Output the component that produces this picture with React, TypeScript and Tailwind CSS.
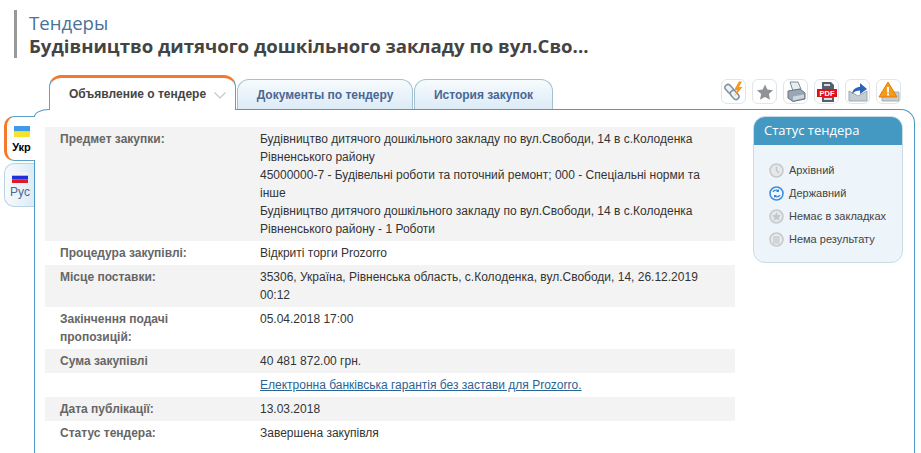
const rows: { l: string[]; v: React.ReactNode; g?: boolean }[] = [
  {
    l: ["Предмет закупки:"],
    g: true,
    v: (
      <>
        Будівництво дитячого дошкільного закладу по вул.Свободи, 14 в с.Колоденка Рівненського району
        <br />
        45000000-7 - Будівельні роботи та поточний ремонт; 000 - Спеціальні норми та інше
        <br />
        Будівництво дитячого дошкільного закладу по вул.Свободи, 14 в с.Колоденка Рівненського району - 1 Роботи
      </>
    ),
  },
  { l: ["Процедура закупівлі:"], v: "Відкриті торги Prozorro" },
  { l: ["Місце поставки:"], g: true, v: "35306, Україна, Рівненська область, с.Колоденка, вул.Свободи, 14, 26.12.2019 00:12" },
  { l: ["Закінчення подачі", "пропозицій:"], v: "05.04.2018 17:00" },
  { l: ["Сума закупівлі"], g: true, v: "40 481 872.00 грн." },
  { l: [], v: <a className="text-[#2a6496] underline">Електронна банківська гарантія без застави для Prozorro.</a> },
  { l: ["Дата публікації:"], g: true, v: "13.03.2018" },
  { l: ["Статус тендера:"], v: "Завершена закупівля" },
];

function Flag({ a, b, c }: { a: string; b: string; c?: string }) {
  return (
    <svg width="16" height="11" viewBox="0 0 16 11" className="block">
      {c ? (
        <>
          <rect width="16" height="3.700" fill={a} />
          <rect y="3.700" width="16" height="3.700" fill={b} />
          <rect y="7.400" width="16" height="3.600" fill={c} />
        </>
      ) : (
        <>
          <rect width="16" height="5.500" fill={a} />
          <rect y="5.500" width="16" height="5.500" fill={b} />
        </>
      )}
    </svg>
  );
}

const toolIcons = [
  <svg key="0" width="22" height="22" viewBox="0 0 22 22" fill="none">
    <g transform="rotate(48 9 11)" stroke="#7f909e" strokeWidth="1.500" fill="#eef2f5">
      <rect x="0" y="8" width="10" height="6" rx="3" />
      <rect x="8" y="8" width="10" height="6" rx="3" />
    </g>
    <path d="M16 0.500 L11 9 L14 9 L12 15 L19.500 6 L16 6 L19 0.500 Z" fill="#f29a1f" />
  </svg>,
  <svg key="1" width="20" height="20" viewBox="0 0 20 20">
    <path d="M10 2.500 L12.400 7.600 L18 8.300 L13.900 12.100 L15 17.700 L10 15 L5 17.700 L6.100 12.100 L2 8.300 L7.600 7.600 Z" fill="#8f9397" />
  </svg>,
  <svg key="2" width="22" height="22" viewBox="0 0 22 22">
    <path d="M5 1 L13 1 L16 8 L8 10 Z" fill="#e8edf0" stroke="#7d8a95" />
    <path d="M3 10 L15 8 L20 12 L20 18 L8 20.500 L3 17 Z" fill="#9aa7b2" stroke="#66737e" />
    <path d="M8 15.500 L19 13.500 L19 17 L8 19.500 Z" fill="#cfd6dc" />
  </svg>,
  <svg key="3" width="22" height="22" viewBox="0 0 22 22">
    <path d="M6 1 H15 L18 4 V21 H6 Z" fill="#55606b" />
    <path d="M8 3 H14 V5 H8 Z M8 17 H16 V19 H8 Z" fill="#d8dde2" />
    <rect x="1" y="8" width="20" height="8" fill="#e0101a" />
    <text x="11" y="14.700" textAnchor="middle" fontSize="7.500" fontWeight="700" fill="#fff" fontFamily="Liberation Sans">PDF</text>
  </svg>,
  <svg key="4" width="22" height="22" viewBox="0 0 22 22">
    <path d="M2 10 L11 15 L20 10 V20 H2 Z" fill="#c5ccd2" stroke="#a0a9b1" />
    <path d="M5 13 C6 8 9 6 13 6 V2 L20 8 L13 13 V9.500 C10 9.500 7 10.500 5 13 Z" fill="#2d62b5" />
  </svg>,
  <svg key="5" width="22" height="22" viewBox="0 0 22 22">
    <path d="M4 11 H21 V20 H4 Z" fill="#c9ced3" stroke="#a5acb3" />
    <path d="M10 1 L19 16 H1 Z" fill="#f59a16" stroke="#e07f0a" />
    <rect x="9" y="6" width="2" height="5.500" fill="#fff" />
    <rect x="9" y="12.500" width="2" height="2" fill="#fff" />
  </svg>,
];

const statusIcons = [
  <svg key="a" width="15" height="15" viewBox="0 0 15 15" fill="none">
    <circle cx="7.500" cy="7.500" r="6.500" fill="#e4e8ea" stroke="#c6cacc" strokeWidth="1.600" />
    <path d="M7.500 3.500 V7.500 L10 10" stroke="#c3c7ca" strokeWidth="1.400" />
  </svg>,
  <svg key="b" width="15" height="15" viewBox="0 0 15 15" fill="none">
    <circle cx="7.500" cy="7.500" r="6.500" fill="#eef7fd" stroke="#3f8fdc" strokeWidth="1.600" />
    <path d="M3.500 6 C4.500 3.500 7 3 9 4 L10 3 V6 H7 L8 5 C6.500 4.500 5.500 5 5 6 Z M11.500 9 C10.500 11.500 8 12 6 11 L5 12 V9 H8 L7 10 C8.500 10.500 9.500 10 10 9 Z" fill="#3586d6" />
  </svg>,
  <svg key="c" width="15" height="15" viewBox="0 0 15 15" fill="none">
    <circle cx="7.500" cy="7.500" r="6.500" fill="#e4e8ea" stroke="#c6cacc" strokeWidth="1.600" />
    <path d="M7.500 3 L8.800 6 L12 6.300 L9.600 8.400 L10.300 11.500 L7.500 9.900 L4.700 11.500 L5.400 8.400 L3 6.300 L6.200 6 Z" fill="#c3c7ca" />
  </svg>,
  <svg key="d" width="15" height="15" viewBox="0 0 15 15" fill="none">
    <circle cx="7.500" cy="7.500" r="6.500" fill="#e8ebed" stroke="#c6cacc" strokeWidth="1.600" />
    <path d="M4 5 H11 M4 7 H11 M4 9 H11 M4 11 H11 M5 4 V11.500 M7 4 V11.500 M9 4 V11.500" stroke="#c0c4c7" strokeWidth="0.700" />
  </svg>,
];

const statuses = ["Архівний", "Державний", "Немає в закладках", "Нема результату"];

export default function App() {
  return (
    <div className="w-[921px] h-[453px] overflow-hidden bg-white font-['Liberation_Sans',Arial,sans-serif] text-[12px] text-[#333]">
      <div className="ml-[14px] mt-[10px] pt-[1px] h-[48px] border-l-[3px] border-[#999] pl-[12px] font-['Open_Sans',sans-serif] text-[18.600px] leading-[23px]">
        <div className="text-[#4a7196]">Тендеры</div>
        <div className="font-bold text-[#444]">Будівництво дитячого дошкільного закладу по вул.Сво...</div>
      </div>

      <div className="relative z-10 mt-[17px] ml-[49px] h-[34px] flex items-end gap-px">
        <div className="h-[35px] w-[187px] -mb-px mr-px bg-white border-x border-[#5ba3c7] border-t-[3px] border-t-[#f4792f] rounded-t-[12px] flex items-center pl-[19px] gap-[8px] font-bold text-[#444]">
          <span>Объявление о тендере</span>
          <svg width="12" height="7" viewBox="0 0 12 7" fill="none" className="mt-[3px]">
            <path d="M0.500 0.500 L6 6 L11.500 0.500" stroke="#c4c8cb" strokeWidth="1.200" />
          </svg>
        </div>
        <div className="h-[30px] w-[176px] -ml-px border border-b-0 border-[#a3c1d1] rounded-t-[12px] bg-gradient-to-b from-[#f7fbfd] to-[#dcebf6] flex items-center justify-center font-bold text-[#4a6795]">
          Документы по тендеру
        </div>
        <div className="h-[30px] w-[139px] border border-b-0 border-[#a3c1d1] rounded-t-[12px] bg-gradient-to-b from-[#f7fbfd] to-[#dcebf6] flex items-center justify-center font-bold text-[#4a6795]">
          История закупок
        </div>
        <div className="ml-auto mr-[20px] mb-[5px] flex gap-[6px]">
          {toolIcons.map((icon, i) => (
            <div key={i} className="w-[25px] h-[25px] border border-[#dfe6ea] rounded-[6px] bg-white flex items-center justify-center">
              {icon}
            </div>
          ))}
        </div>
      </div>

      <div className="relative ml-[34px] mr-[6px] h-[400px] border-l border-t border-r border-[#4a9cc5] rounded-tl-[15px_8px] rounded-tr-[14px] flex pl-[10px] pt-[17px]">
        <div className="absolute left-[-31px] top-[6px] w-[31px] flex flex-col gap-[2px]">
          <div className="h-[45px] w-[31px] -mr-px bg-white border-y border-[#5ba3c7] border-l-[3px] border-l-[#f4792f] rounded-l-[10px] flex flex-col items-center pt-[9px] pl-[1px]">
            <Flag a="#3f9be8" b="#f5e22a" />
            <span className="font-bold text-[11px] leading-[17px] mt-[2px] text-black">Укр</span>
          </div>
          <div className="h-[44px] w-[30px] border-y border-l border-[#b9d3e0] rounded-l-[10px] bg-gradient-to-r from-[#f7fbfd] to-[#dcebf6] flex flex-col items-center pt-[8px] pl-[1px]">
            <Flag a="#f3f5f8" b="#2030d8" c="#e0182a" />
            <span className="text-[12px] leading-[17px] mt-px text-[#4a6795]">Рус</span>
          </div>
        </div>

        <div className="w-[690px] shrink-0 leading-[18px]">
          {rows.map((r, i) => (
            <div key={i} className={`flex pt-[3px] pb-[3px] ${r.g ? "bg-[#f3f3f3]" : ""}`}>
              <div className="w-[200px] shrink-0 pl-[15px] font-bold text-[#666]">
                {r.l.map((t) => (
                  <div key={t}>{t}</div>
                ))}
              </div>
              <div className="flex-1 pl-[15px] pr-[10px] min-h-[18px] text-[#333]">{r.v}</div>
            </div>
          ))}
        </div>

        <div className="ml-[18px] mt-[-11px] w-[150px] h-[147px] border border-[#c9dbe5] rounded-[12px] bg-[#edf5fb] overflow-hidden self-start">
          <div className="h-[28px] bg-[#4499c2] text-white text-[13px] leading-[27px] pl-[10px] font-['Open_Sans',sans-serif]">
            Статус тендера
          </div>
          <div className="pt-[17px] pl-[15px] flex flex-col gap-[6px] text-[11px] text-[#444]">
            {statuses.map((s, i) => (
              <div key={s} className="h-[17px] flex items-center gap-[5px]">
                {statusIcons[i]}
                <span>{s}</span>
              </div>
            ))}
          </div>
        </div>
      </div>
    </div>
  );
}
